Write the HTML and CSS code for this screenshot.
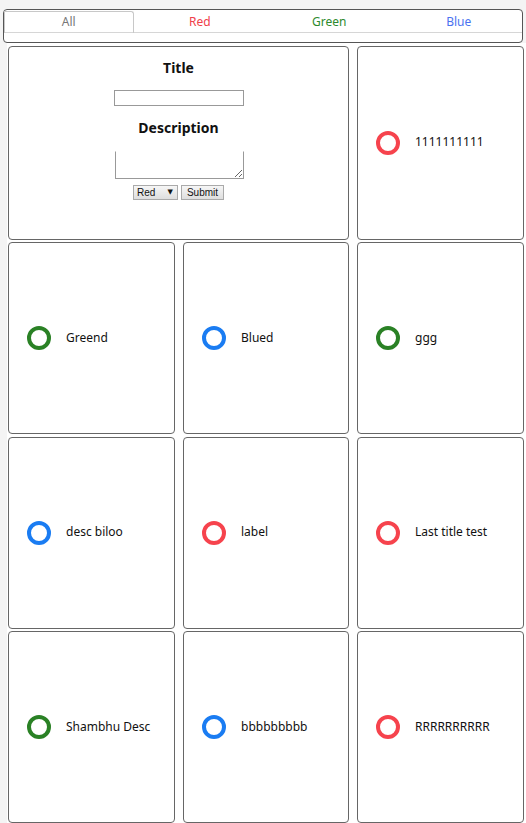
FILE: index.html
```html
<!DOCTYPE html>
<html>
<head>
<meta charset="utf-8">
<link rel="stylesheet" href="styles.css">
</head>
<body>
<header class="top">
  <nav class="tabbox">
    <div class="tabs">
      <div class="tab tab-all active">All</div>
      <div class="tab tab-red">Red</div>
      <div class="tab tab-green">Green</div>
      <div class="tab tab-blue">Blue</div>
    </div>
  </nav>
</header>
<main class="main">
  <div class="grid">
    <div class="card form-card">
      <form class="form">
        <h3 class="label">Title</h3>
        <input class="title-input" type="text">
        <h3 class="label">Description</h3>
        <textarea class="desc-input"></textarea>
        <div class="controls">
          <span class="sel-wrap"><select class="sel"><option>Red</option><option>Green</option><option>Blue</option></select></span>
          <button type="button" class="btn">Submit</button>
        </div>
      </form>
    </div>
    <div class="card item"><span class="dot red"></span><span class="text">1111111111</span></div>
    <div class="card item"><span class="dot green"></span><span class="text">Greend</span></div>
    <div class="card item"><span class="dot blue"></span><span class="text">Blued</span></div>
    <div class="card item"><span class="dot green"></span><span class="text">ggg</span></div>
    <div class="card item"><span class="dot blue"></span><span class="text">desc biloo</span></div>
    <div class="card item"><span class="dot red"></span><span class="text">label</span></div>
    <div class="card item"><span class="dot red"></span><span class="text">Last title test</span></div>
    <div class="card item"><span class="dot green"></span><span class="text">Shambhu Desc</span></div>
    <div class="card item"><span class="dot blue"></span><span class="text">bbbbbbbbb</span></div>
    <div class="card item"><span class="dot red"></span><span class="text">RRRRRRRRRR</span></div>
  </div>
</main>
</body>
</html>
```
FILE: styles.css
```css
html, body {
  margin: 0;
  padding: 0;
}
body {
  background: #f4f4f4;
  font-family: "Noto Sans", "DejaVu Sans", sans-serif;
  font-size: 12px;
  color: #111;
  width: 526px;
  height: 823px;
  overflow: hidden;
}
.top {
  padding: 9px 0 0 3px;
}
.tabbox {
  width: 518px;
  height: 31px;
  border: 1px solid #555;
  border-radius: 4px;
  background: #fff;
  padding-top: 1px;
  box-sizing: content-box;
}
.tabs {
  display: grid;
  grid-template-columns: repeat(4, 1fr);
  height: 22px;
  border-bottom: 1px solid #d6d6d6;
  box-sizing: border-box;
}
.tab {
  text-align: center;
  line-height: 22px;
  font-size: 12px;
}
.tab.active {
  border: 1px solid #c8c8c8;
  border-bottom: none;
  border-radius: 0 3px 0 0;
  line-height: 20px;
}
.tab-all { color: #777; }
.tab-red { color: #f0404a; padding-left: 3px; }
.tab-green { color: #2d8a2d; padding-left: 3px; }
.tab-blue { color: #4a72f0; padding-left: 3px; }
.main {
  background: #fff;
  margin-left: 7px;
  padding: 3px 0 0 1px;
  height: 780px;
}
.grid {
  display: grid;
  grid-template-columns: 167px 166px 167px;
  grid-template-rows: 193.5px;
  grid-auto-rows: 192px;
  column-gap: 8px;
  row-gap: 2.5px;
}
.card {
  border: 1px solid #666;
  border-radius: 4px;
  box-sizing: border-box;
  background: #fff;
}
.form-card {
  grid-column: span 2;
  display: flex;
  justify-content: center;
}
.form {
  display: flex;
  flex-direction: column;
  align-items: center;
  padding-top: 11px;
}
.label {
  margin: 0;
  font-size: 14px;
  font-weight: bold;
  line-height: 20px;
}
.title-input {
  width: 130px;
  height: 16px;
  box-sizing: border-box;
  border: 1px solid #999;
  margin: 12px 0 12px 0;
  padding: 0;
}
.desc-input {
  width: 129px;
  height: 28px;
  box-sizing: border-box;
  border: 1px solid #999;
  border-top-color: #fff;
  margin: 13px 0 0 1px;
  padding: 0;
  resize: both;
}
.controls {
  display: flex;
  gap: 3px;
  margin-top: 6px;
}
.sel-wrap {
  position: relative;
  display: block;
}
.sel-wrap::after {
  content: "▼";
  position: absolute;
  right: 5px;
  top: 2px;
  font-size: 7px;
  line-height: 10px;
  color: #111;
  pointer-events: none;
  font-family: "DejaVu Sans", sans-serif;
}
.sel, .btn {
  font-family: "Liberation Sans", Arial, sans-serif;
  font-size: 10px;
  height: 15px;
  border: 1px solid #aaa;
  background: linear-gradient(#f6f6f6, #dedede);
  color: #111;
  padding: 0 3px;
  box-sizing: border-box;
  border-radius: 0;
  margin: 0;
}
.sel {
  width: 45px;
  appearance: none;
  -webkit-appearance: none;
  display: block;
  line-height: 13px;
}
.btn { width: 43px; }
.item {
  display: flex;
  align-items: center;
  padding-left: 18px;
}
.dot {
  width: 24px;
  height: 24px;
  border-radius: 50%;
  border: 4.5px solid #f0404a;
  box-sizing: border-box;
  flex: none;
}
.dot.red { border-color: #f6434d; }
.dot.green { border-color: #2a8125; }
.dot.blue { border-color: #1a7cf2; }
.text {
  margin-left: 15px;
  font-size: 12px;
  color: #111;
  position: relative;
  top: -1px;
}
```
